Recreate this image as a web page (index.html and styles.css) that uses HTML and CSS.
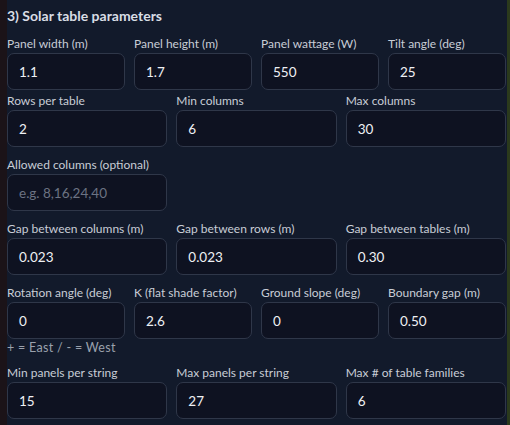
FILE: index.html
```html
<!DOCTYPE html>
<html>
<head>
<meta charset="utf-8">
<link rel="stylesheet" href="styles.css">
</head>
<body>
<div class="strip-left"></div>
<main class="panel">
  <h3 class="title">3) Solar table parameters</h3>

  <div class="grid cols4">
    <div class="field"><label>Panel width (m)</label><div class="input">1.1</div></div>
    <div class="field"><label>Panel height (m)</label><div class="input">1.7</div></div>
    <div class="field"><label>Panel wattage (W)</label><div class="input">550</div></div>
    <div class="field"><label>Tilt angle (deg)</label><div class="input">25</div></div>
  </div>

  <div class="grid cols3 tight">
    <div class="field"><label>Rows per table</label><div class="input">2</div></div>
    <div class="field"><label>Min columns</label><div class="input">6</div></div>
    <div class="field"><label>Max columns</label><div class="input">30</div></div>
  </div>

  <div class="grid cols3">
    <div class="field"><label>Allowed columns (optional)</label><div class="input placeholder">e.g. 8,16,24,40</div></div>
  </div>

  <div class="grid cols3">
    <div class="field"><label>Gap between columns (m)</label><div class="input">0.023</div></div>
    <div class="field"><label>Gap between rows (m)</label><div class="input">0.023</div></div>
    <div class="field"><label>Gap between tables (m)</label><div class="input">0.30</div></div>
  </div>

  <div class="grid cols4">
    <div class="field"><label>Rotation angle (deg)</label><div class="input">0</div><div class="hint">+ = East / - = West</div></div>
    <div class="field"><label>K (flat shade factor)</label><div class="input">2.6</div></div>
    <div class="field"><label>Ground slope (deg)</label><div class="input">0</div></div>
    <div class="field"><label>Boundary gap (m)</label><div class="input">0.50</div></div>
  </div>

  <div class="grid cols3">
    <div class="field"><label>Min panels per string</label><div class="input">15</div></div>
    <div class="field"><label>Max panels per string</label><div class="input">27</div></div>
    <div class="field"><label>Max # of table families</label><div class="input">6</div></div>
  </div>
</main>
<div class="strip-right"></div>
</body>
</html>
```

FILE: styles.css
```css
html, body {
  margin: 0;
  padding: 0;
  height: 100%;
}
body {
  display: flex;
  background: #121a2b;
  font-family: "Lato", "Noto Sans", sans-serif;
  color: #c9ced8;
  overflow: hidden;
}
.strip-left {
  width: 7px;
  flex: none;
  background: #1b1318;
}
.strip-right {
  width: 3px;
  flex: none;
  background: #2b3a1c;
}
.panel {
  flex: 1;
  padding: 6px 1px 0 0;
  min-width: 0;
}
.title {
  margin: 0 0 10px 0;
  font-size: 14px;
  line-height: 20px;
  font-weight: 700;
  color: #d9dde5;
}
.grid {
  display: grid;
  column-gap: 9px;
  margin-top: 10px;
}
.grid:first-of-type { margin-top: 0; }
.grid.tight { margin-top: 3px; }
.cols4 { grid-template-columns: repeat(4, 1fr); }
.cols3 { grid-template-columns: repeat(3, 1fr); }
.field label {
  display: block;
  font-size: 12px;
  line-height: 16px;
  margin-bottom: 1px;
  color: #c8cdd6;
  white-space: nowrap;
}
.input {
  box-sizing: border-box;
  height: 37px;
  border: 1px solid #2f3749;
  border-radius: 7px;
  background: #0e1221;
  padding: 0 11px;
  display: flex;
  align-items: center;
  font-size: 13.5px;
  color: #eef0f4;
}
.input.placeholder {
  color: #6c7383;
}
.hint {
  font-size: 12.5px;
  letter-spacing: 0.3px;
  line-height: 14px;
  margin-top: 2px;
  color: #9aa1ad;
  white-space: nowrap;
}
```
